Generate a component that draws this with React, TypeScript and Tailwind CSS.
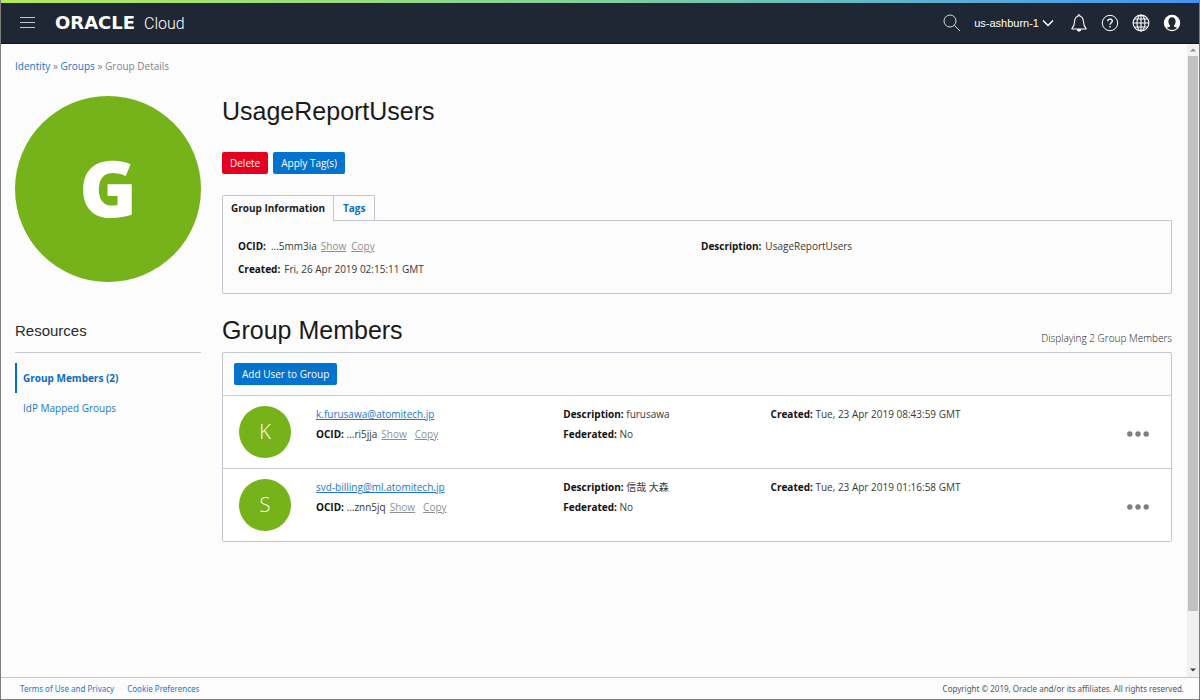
import type { ReactNode } from "react";

type Member = {
  initial: string;
  email: string;
  ocid: string;
  description: string;
  federated: string;
  created: string;
};

const members: Member[] = [
  {
    initial: "K",
    email: "k.furusawa@atomitech.jp",
    ocid: "...ri5jja",
    description: "furusawa",
    federated: "No",
    created: "Tue, 23 Apr 2019 08:43:59 GMT",
  },
  {
    initial: "S",
    email: "svd-billing@ml.atomitech.jp",
    ocid: "...znn5jq",
    description: "信哉 大森",
    federated: "No",
    created: "Tue, 23 Apr 2019 01:16:58 GMT",
  },
];

function IconButton({ label, children }: { label: string; children: ReactNode }) {
  return (
    <button type="button" aria-label={label} className="flex shrink-0 items-center justify-center">
      {children}
    </button>
  );
}

function Header() {
  return (
    <header>
      <div className="h-[3px] bg-linear-to-r from-[#b4ea50] via-[#82cf9b] to-[#4a90f0]" />
      <div className="flex h-[41px] items-center border-b border-[#0f161d] bg-[#1e2733] pr-[18px] pl-[18px] text-white">
        <IconButton label="Open navigation menu">
          <svg width="17" height="12" viewBox="0 0 17 12" stroke="#c4c8cc" strokeWidth="1">
            <path d="M1 0.5h15M1 5.5h15M1 10.5h15" />
          </svg>
        </IconButton>
        <a href="#home" className="ml-[19px] flex items-baseline gap-[9px] leading-5">
          <span className="font-['DejaVu_Sans',sans-serif] text-[18px] font-bold">ORACLE</span>
          <span className="font-['Roboto','Liberation_Sans',sans-serif] text-[16px] font-light">Cloud</span>
        </a>
        <div className="ml-auto flex items-center">
          <IconButton label="Search">
            <svg width="18" height="18" viewBox="0 0 18 18" fill="none" stroke="#d5d8db" strokeWidth="1">
              <circle cx="7" cy="7" r="6" />
              <path d="M11.3 11.3L17 17" />
            </svg>
          </IconButton>
          <button
            type="button"
            className="ml-[13px] flex items-center gap-[3px] font-['Liberation_Sans',sans-serif] text-[11px]"
          >
            us-ashburn-1
            <svg width="12" height="8" viewBox="0 0 12 8" fill="none" stroke="#ffffff" strokeWidth="1.5">
              <path d="M1 1.5l5 5 5-5" />
            </svg>
          </button>
          <div className="ml-4 flex items-center gap-[13px]">
            <IconButton label="Announcements">
              <svg width="18" height="18" viewBox="0 0 18 18" fill="none" stroke="#ffffff" strokeWidth="1.1">
                <path d="M8 2.2C8 0.4 10 0.4 10 2.2C12.6 2.8 13.4 5 13.5 8C13.6 11 14.4 12.7 16 14.3V15H2V14.3C3.6 12.7 4.4 11 4.5 8C4.6 5 5.4 2.8 8 2.2Z" />
                <path d="M7.3 15.5C7.5 17.6 10.5 17.6 10.7 15.5Z" fill="#ffffff" />
              </svg>
            </IconButton>
            <IconButton label="Help">
              <svg width="18" height="18" viewBox="0 0 18 18" fill="none" stroke="#ffffff">
                <circle cx="9" cy="9" r="7.7" strokeWidth="1" />
                <path d="M6.8 7.2C6.8 4.4 11.3 4.4 11.3 7C11.3 8.8 9 8.7 9 10.7" strokeWidth="1.4" />
                <circle cx="9" cy="12.8" r="0.5" fill="#ffffff" strokeWidth="0.7" />
              </svg>
            </IconButton>
            <IconButton label="Language">
              <svg width="18" height="18" viewBox="0 0 18 18" fill="none" stroke="#ffffff" strokeWidth="1.1">
                <circle cx="9" cy="9" r="7.9" />
                <ellipse cx="9" cy="9" rx="4" ry="7.9" />
                <path d="M9 1v16M1 9h16M2.3 5h13.4M2.3 13h13.4" />
              </svg>
            </IconButton>
            <IconButton label="Profile">
              <svg width="18" height="18" viewBox="0 0 18 18">
                <circle cx="9" cy="9" r="8.2" fill="#ffffff" />
                <path
                  d="M9 3.3C11.4 3.3 12.6 5 12.6 7.4C12.6 9.2 11.8 10.8 10.8 11.7C11 12.8 12.6 13 14 13.8C12.8 15.2 11 16 9 16C7 16 5.2 15.2 4 13.8C5.4 13 7 12.8 7.2 11.7C6.2 10.8 5.4 9.2 5.4 7.4C5.4 5 6.6 3.3 9 3.3Z"
                  fill="#1e2733"
                />
              </svg>
            </IconButton>
          </div>
        </div>
      </div>
    </header>
  );
}

function Sidebar() {
  return (
    <aside className="w-[186px] shrink-0">
      <div className="flex aspect-square items-center justify-center rounded-full bg-[#76b31a] pb-1 font-['Open_Sans','Noto_Sans',sans-serif] text-[78px] leading-none font-extrabold text-white">
        G
      </div>
      <h2 className="mt-[39px] border-b border-[#c6c9d0] pb-[11px] font-['Liberation_Sans',sans-serif] text-[15px] leading-5 text-[#2a2a2a]">
        Resources
      </h2>
      <nav aria-label="Resources" className="mt-[10px]">
        <a
          href="#members"
          aria-current="page"
          className="flex h-[30px] items-center border-l-2 border-[#0070d0] pl-[6px] font-bold text-[#0a6cc8]"
        >
          Group Members (2)
        </a>
        <a href="#idp" className="flex h-[30px] items-center pl-2 text-[#2375cc]">
          IdP Mapped Groups
        </a>
      </nav>
    </aside>
  );
}

function GroupInformation() {
  return (
    <section className="mt-[21px]">
      <div role="tablist" className="flex">
        <button
          type="button"
          role="tab"
          aria-selected="true"
          className="relative z-10 -mb-px h-[26px] rounded-tl-xs border border-b-0 border-[#c0c5ce] bg-[#fcfcfc] px-2 font-bold text-[#1a1a1a]"
        >
          Group Information
        </button>
        <button
          type="button"
          role="tab"
          aria-selected="false"
          className="h-[25px] rounded-tr-xs border border-l-0 border-b-0 border-[#c0c5ce] px-[9px] font-bold text-[#0a6cc8]"
        >
          Tags
        </button>
      </div>
      <div
        role="tabpanel"
        className="grid min-h-[74px] grid-cols-2 content-start rounded-b-xs border border-[#c0c5ce] pt-[14px] pr-[7px] pb-3 pl-[15px] leading-[23px]"
      >
        <div>
          <p>
            <b className="mr-[5px] text-[#111111]">OCID:</b>
            <span className="mr-1">...5mm3ia</span>
            <a href="#show" className="mr-[5px] text-[#8f8f8f] underline">Show</a>
            <a href="#copy" className="text-[#8f8f8f] underline">Copy</a>
          </p>
          <p>
            <b className="mr-1 text-[#111111]">Created:</b>
            Fri, 26 Apr 2019 02:15:11 GMT
          </p>
        </div>
        <p>
          <b className="mr-1 text-[#111111]">Description:</b>
          UsageReportUsers
        </p>
      </div>
    </section>
  );
}

function MemberRow({ member }: { member: Member }) {
  return (
    <li className="grid min-h-[73px] grid-cols-[77px_247fr_207fr_356fr_22px] items-start border-t border-[#c6ccd2] bg-white pt-[8px] pr-[22px] pl-4 leading-5">
      <div className="mt-[2px] flex size-[52px] items-center justify-center rounded-full bg-[#76b31a] text-[20px] font-light text-white">
        {member.initial}
      </div>
      <div>
        <p>
          <a href="#user" className="text-[#2375cc] underline">{member.email}</a>
        </p>
        <p>
          <b className="text-[#111111]">OCID:</b> {member.ocid}
          <a href="#show" className="ml-1 text-[#8f8f8f] underline">Show</a>
          <a href="#copy" className="ml-2 text-[#8f8f8f] underline">Copy</a>
        </p>
      </div>
      <div>
        <p>
          <b className="text-[#111111]">Description:</b> {member.description}
        </p>
        <p>
          <b className="text-[#111111]">Federated:</b> {member.federated}
        </p>
      </div>
      <p>
        <b className="text-[#111111]">Created:</b> {member.created}
      </p>
      <button type="button" aria-label={`Actions for ${member.email}`} className="mt-5 flex h-5 items-center">
        <svg width="22" height="6" viewBox="0 0 22 6" fill="#7f7f7f">
          <circle cx="2.8" cy="3" r="2.7" />
          <circle cx="11" cy="3" r="2.7" />
          <circle cx="19.2" cy="3" r="2.7" />
        </svg>
      </button>
    </li>
  );
}

function Scrollbar() {
  return (
    <div aria-hidden="true" className="flex w-3 shrink-0 flex-col bg-[#f0f0f0] px-px">
      <div className="flex h-3 items-center justify-center">
        <svg width="6" height="4" viewBox="0 0 6 4" fill="#8c8c8c">
          <path d="M0 3.5L3 0.5L6 3.5Z" />
        </svg>
      </div>
      <div className="grow-[556] bg-[#c1c1c1]" />
      <div className="grow-[52]" />
      <div className="flex h-[14px] items-center justify-center">
        <svg width="6" height="4" viewBox="0 0 6 4" fill="#404040">
          <path d="M0 0.5L3 3.5L6 0.5Z" />
        </svg>
      </div>
    </div>
  );
}

export default function App() {
  return (
    <div className="flex min-h-screen flex-col border-r border-b border-l border-[#7d7d7d] bg-[#fcfcfc] font-['Open_Sans','Noto_Sans','Noto_Sans_CJK_JP',sans-serif] text-[10px] text-[#383838]">
      <Header />
      <div className="flex grow">
        <div className="min-w-0 grow pr-[15px] pb-6 pl-[14px]">
          <nav aria-label="Breadcrumb" className="pt-3 leading-5 text-[#858585]">
            <a href="#identity" className="text-[#2375cc]">Identity</a> »{" "}
            <a href="#groups" className="text-[#2375cc]">Groups</a> » Group Details
          </nav>
          <div className="mt-5 flex gap-[21px]">
            <Sidebar />
            <main className="min-w-0 grow">
              <h1 className="font-['Liberation_Sans',sans-serif] text-[25px] leading-[30px] text-[#1a1a1a]">
                UsageReportUsers
              </h1>
              <div className="mt-[26px] flex gap-[5px] text-white">
                <button type="button" className="h-[22px] rounded-xs bg-[#e6001f] px-2">Delete</button>
                <button type="button" className="h-[22px] rounded-xs bg-[#0572ce] px-2">Apply Tag(s)</button>
              </div>
              <GroupInformation />
              <section className="mt-[21px]">
                <div className="flex items-end justify-between">
                  <h2 className="font-['Liberation_Sans',sans-serif] text-[25px] leading-[30px] text-[#1a1a1a]">
                    Group Members
                  </h2>
                  <p className="leading-[14px] font-light text-[#222222]">Displaying 2 Group Members</p>
                </div>
                <div className="mt-[7px] rounded-xs border border-[#c0c5ce]">
                  <div className="flex h-[42px] items-center px-[11px]">
                    <button type="button" className="h-[22px] rounded-xs bg-[#0572ce] px-2 text-white">
                      Add User to Group
                    </button>
                  </div>
                  <ul>
                    {members.map((member) => (
                      <MemberRow key={member.email} member={member} />
                    ))}
                  </ul>
                </div>
              </section>
            </main>
          </div>
        </div>
        <Scrollbar />
      </div>
      <footer className="flex h-[22px] items-center gap-[13px] border-t border-[#c8c8c8] pr-[15px] pl-[19px] font-['Noto_Sans',sans-serif] text-[8px] text-[#555555]">
        <a href="#terms" className="text-[#2375cc]">Terms of Use and Privacy</a>
        <a href="#cookies" className="text-[#2375cc]">Cookie Preferences</a>
        <span className="ml-auto">Copyright © 2019, Oracle and/or its affiliates. All rights reserved.</span>
      </footer>
    </div>
  );
}
